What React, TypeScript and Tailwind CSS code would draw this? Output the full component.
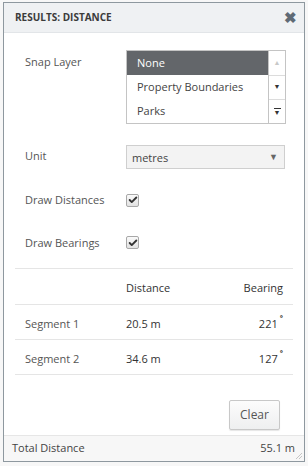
import { Check } from 'lucide-react';

const rows = [
  { name: 'Segment 1', distance: '20.5 m', bearing: '221' },
  { name: 'Segment 2', distance: '34.6 m', bearing: '127' },
];

function Checkbox() {
  return (
    <span className="flex h-[13px] w-[13px] items-center justify-center rounded-[2px] border border-[#a8a8a8] bg-gradient-to-b from-[#fafafa] to-[#e2e2e2]">
      <Check className="h-[10px] w-[10px] text-[#333]" strokeWidth={4.5} />
    </span>
  );
}

export default function App() {
  return (
    <div className="h-[466px] w-[308px] bg-[#f7f7f7] pl-[3px] pt-[2px] font-['Open_Sans',sans-serif] text-[11px] text-[#555]">
      <div className="flex h-[460px] w-[302px] flex-col border border-[#8e989f] bg-white">
        {/* Header */}
        <div className="flex h-[30px] shrink-0 items-center justify-between border-b border-[#e2e5e8] bg-[#eff1f3] pl-[11px] pr-[7px]">
          <span className="text-[10px] font-bold text-[#3b3b3b]">RESULTS: DISTANCE</span>
          <span className="text-[15px] font-bold leading-none text-[#5f6a75]">✖</span>
        </div>

        <div className="flex flex-1 flex-col px-[11px]">
          {/* Snap layer */}
          <div className="mt-[17px] flex">
            <span className="w-[111px] pl-[10px] pt-[4px]">Snap Layer</span>
            <div className="flex h-[74px] w-[160px] border border-[#c4c4c4]">
              <div className="flex flex-1 flex-col">
                <div className="flex h-[24px] items-center bg-[#63666a] pl-[10px] text-white">None</div>
                <div className="flex h-[24px] items-center pl-[10px] text-[#444]">Property Boundaries</div>
                <div className="flex h-[24px] items-center pl-[10px] text-[#444]">Parks</div>
              </div>
              <div className="flex w-[17px] flex-col border-l border-[#c4c4c4]">
                <div className="flex h-[24px] items-center justify-center text-[7px] text-[#c8c8c8]">▲</div>
                <div className="flex h-[24px] items-center justify-center border-t border-[#dcdcdc] text-[7px] text-[#333]">▼</div>
                <div className="flex flex-1 flex-col items-center justify-center border-t border-[#dcdcdc]">
                  <span className="h-[1px] w-[7px] bg-[#333]" />
                  <span className="text-[7px] leading-[7px] text-[#333]">▼</span>
                </div>
              </div>
            </div>
          </div>

          {/* Unit */}
          <div className="mt-[24px] flex items-start">
            <span className="w-[111px] pl-[10px]">Unit</span>
            <div className="mt-[-3px] flex h-[24px] w-[159px] items-center justify-between border border-[#cfcfcf] bg-[#f3f3f3] pl-[5px] pr-[6px] text-[#444]">
              <span className="pt-[2px]">metres</span>
              <span className="text-[9px] text-[#666]">▼</span>
            </div>
          </div>

          {/* Draw options */}
          <div className="mt-[23px] flex items-center">
            <span className="w-[111px] pl-[10px]">Draw Distances</span>
            <Checkbox />
          </div>

          <div className="mt-[26px] flex items-center">
            <span className="w-[111px] pl-[10px]">Draw Bearings</span>
            <Checkbox />
          </div>

          {/* Table */}
          <div className="mt-[17px] border-t border-[#e5e5e5]">
            <div className="flex h-[36px] items-center border-b border-[#e5e5e5] pt-[3px] text-[#333]">
              <span className="w-[111px]" />
              <span className="flex-1">Distance</span>
              <span className="pr-[10px]">Bearing</span>
            </div>
            {rows.map((r) => (
              <div key={r.name} className="flex h-[35px] items-center border-b border-[#e5e5e5] pt-[4px]">
                <span className="w-[111px] pl-[10px]">{r.name}</span>
                <span className="flex-1 text-[#333]">{r.distance}</span>
                <span className="pr-[10px] text-[#333]">
                  {r.bearing}
                  <span className="relative top-[-4px] ml-[2px] text-[10px] font-bold">˚</span>
                </span>
              </div>
            ))}
          </div>

          <div className="mt-auto mb-[5px] flex justify-end pr-[13px]">
            <button className="h-[30px] w-[51px] rounded-[2px] border border-[#c8c8c8] bg-gradient-to-b from-[#fcfcfc] to-[#eeeff0] text-[12px] text-[#555] shadow-[0_1px_1px_rgba(0,0,0,0.1)]">
              Clear
            </button>
          </div>
        </div>

        {/* Footer */}
        <div className="relative flex h-[26px] shrink-0 items-center justify-between border-t border-[#e6e6e6] bg-[#f7f7f7] pl-[8px] pr-[9px] text-[#444]">
          <span>Total Distance</span>
          <span>55.1 m</span>
          <svg className="absolute bottom-[1px] right-[1px]" width="9" height="9" viewBox="0 0 9 9">
            <path d="M8 2 L2 8 M8 5 L5 8" stroke="#c5c5c5" strokeWidth="1" />
          </svg>
        </div>
      </div>
    </div>
  );
}
